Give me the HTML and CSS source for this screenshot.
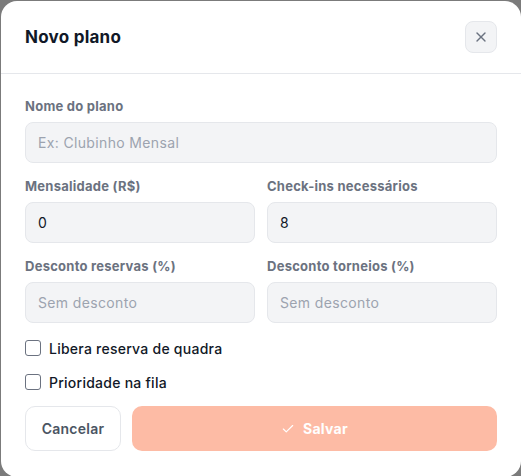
FILE: index.html
```html
<!DOCTYPE html>
<html lang="pt-BR">
<head>
    <meta charset="UTF-8">
    <meta name="viewport" content="width=device-width, initial-scale=1.0">
    <title>Novo plano</title>
    <link rel="stylesheet" href="styles.css">
</head>
<body>
    <div class="modal">
        <div class="modal-header">
            <h2 class="modal-title">Novo plano</h2>
            <button class="close-button" type="button" aria-label="Fechar">
                <svg width="16" height="16" viewBox="0 0 24 24" fill="none" stroke="currentColor" stroke-width="2" stroke-linecap="round">
                    <line x1="18" y1="6" x2="6" y2="18"></line>
                    <line x1="6" y1="6" x2="18" y2="18"></line>
                </svg>
            </button>
        </div>

        <form class="modal-body">
            <div class="field">
                <label class="field-label">Nome do plano</label>
                <input type="text" class="input-field" placeholder="Ex: Clubinho Mensal">
            </div>

            <div class="field-row">
                <div class="field">
                    <label class="field-label">Mensalidade (R$)</label>
                    <input type="text" class="input-field" value="0">
                </div>
                <div class="field">
                    <label class="field-label">Check-ins necessários</label>
                    <input type="text" class="input-field" value="8">
                </div>
            </div>

            <div class="field-row">
                <div class="field">
                    <label class="field-label">Desconto reservas (%)</label>
                    <input type="text" class="input-field" placeholder="Sem desconto">
                </div>
                <div class="field">
                    <label class="field-label">Desconto torneios (%)</label>
                    <input type="text" class="input-field" placeholder="Sem desconto">
                </div>
            </div>

            <label class="checkbox-wrapper">
                <span class="custom-checkbox"></span>
                <span>Libera reserva de quadra</span>
            </label>
            <label class="checkbox-wrapper">
                <span class="custom-checkbox"></span>
                <span>Prioridade na fila</span>
            </label>

            <div class="actions">
                <button type="button" class="cancel-button">Cancelar</button>
                <button type="submit" class="save-button" disabled>
                    <svg width="14" height="14" viewBox="0 0 24 24" fill="none" stroke="currentColor" stroke-width="2" stroke-linecap="round" stroke-linejoin="round">
                        <polyline points="20 6 9 17 4 12"></polyline>
                    </svg>
                    Salvar
                </button>
            </div>
        </form>
    </div>
</body>
</html>
```

FILE: styles.css
```css
* {
    margin: 0;
    padding: 0;
    box-sizing: border-box;
    font-family: 'Inter', sans-serif;
    letter-spacing: 0.25px;
}

body {
    background: #7b7b7b;
    width: 521px;
    height: 476px;
    overflow: hidden;
    padding: 1px 0 0 1px;
}

.modal {
    width: 520px;
    height: 476px;
    background: #ffffff;
    border-radius: 16px;
    overflow: hidden;
}

.modal-header {
    height: 73px;
    display: flex;
    align-items: center;
    justify-content: space-between;
    padding: 0 24px;
    border-bottom: 1px solid #e5e7eb;
}

.modal-title {
    font-size: 17px;
    font-weight: 700;
    color: #111827;
}

.close-button {
    width: 32px;
    height: 32px;
    border-radius: 8px;
    border: 1px solid #e5e7eb;
    background: #f3f4f6;
    color: #6b7280;
    display: flex;
    align-items: center;
    justify-content: center;
    cursor: pointer;
}

.modal-body {
    padding: 24px 24px 0;
    display: flex;
    flex-direction: column;
}

.field {
    display: flex;
    flex-direction: column;
    flex: 1;
    margin-bottom: 15px;
}

.field-row {
    display: flex;
    gap: 12px;
}

.field-label {
    font-size: 13px;
    font-weight: 700;
    line-height: 16px;
    color: #6b7280;
    margin-bottom: 8px;
}

.input-field {
    height: 41px;
    width: 100%;
    padding: 0 12px;
    background: #f3f4f6;
    border: 1px solid #e5e7eb;
    border-radius: 8px;
    font-size: 14px;
    letter-spacing: 0.35px;
    color: #111827;
}

.input-field::placeholder {
    color: #9ca3af;
}

.checkbox-wrapper {
    display: flex;
    align-items: center;
    gap: 8px;
    height: 20px;
    font-size: 14px;
    font-weight: 500;
    letter-spacing: 0.45px;
    color: #111827;
    cursor: pointer;
}

.checkbox-wrapper + .checkbox-wrapper {
    margin-top: 14px;
}

.custom-checkbox {
    width: 16px;
    height: 16px;
    border: 1px solid #6b7280;
    border-radius: 3px;
    background: #ffffff;
}

.actions {
    display: flex;
    gap: 11px;
    margin-top: 14px;
}

.cancel-button {
    height: 45px;
    width: 96px;
    background: #ffffff;
    border: 1px solid #e5e7eb;
    border-radius: 10px;
    font-size: 14px;
    font-weight: 600;
    color: #4b5563;
    cursor: pointer;
}

.save-button {
    flex: 1;
    height: 45px;
    display: flex;
    align-items: center;
    justify-content: center;
    gap: 8px;
    background: #fdbba5;
    border: none;
    border-radius: 10px;
    font-size: 14px;
    font-weight: 700;
    color: #ffffff;
}

.save-button:disabled {
    cursor: not-allowed;
}
```
